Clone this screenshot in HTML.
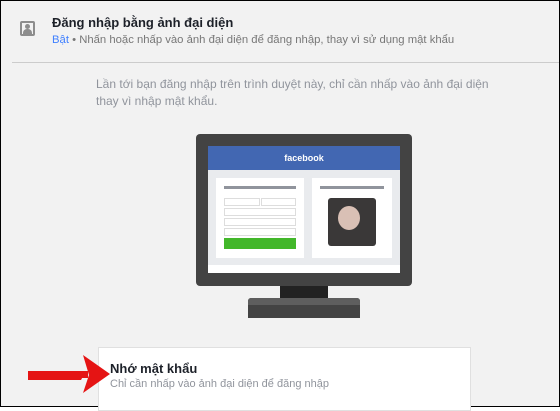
<!DOCTYPE html><html><head><meta charset="utf-8"><style>
body{margin:0;width:560px;height:407px;overflow:hidden;font-family:"Liberation Sans",Arial,sans-serif}
.f{position:relative;width:558px;height:405px;border:1px solid #000;background:#f2f2f2}
.a{position:absolute}
</style></head><body><div class="f">
<div class="a" style="left:19px;top:20px;width:15px;height:15px;background:#8d8d8d;border-radius:2px"><div class="a" style="left:2px;top:2px;width:11px;height:11px;background:#f2f2f2"></div><div class="a" style="left:5px;top:3px;width:5px;height:5px;border-radius:50%;background:#8d8d8d"></div><div class="a" style="left:3px;top:8px;width:9px;height:5px;border-radius:4px 4px 0 0;background:#8d8d8d"></div></div>
<div class="a" style="left:51px;top:14px;font-size:13px;font-weight:bold;color:#1d2129">Đăng nhập bằng ảnh đại diện</div>
<div class="a" style="left:51px;top:33px;font-size:11.3px;color:#777"><span style="color:#4080ff">Bật</span> • Nhấn hoặc nhấp vào ảnh đại diện để đăng nhập, thay vì sử dụng mật khẩu</div>
<div class="a" style="left:11px;top:61px;width:547px;height:1px;background:#ccc"></div>
<div class="a" style="left:95px;top:75px;font-size:12px;line-height:17px;color:#90949c">Lần tới bạn đăng nhập trên trình duyệt này, chỉ cần nhấp vào ảnh đại diện<br>thay vì nhập mật khẩu.</div>
<div class="a" style="left:195px;top:133px;width:216px;height:152px;background:#434343;border-radius:4px"></div>
<div class="a" style="left:207px;top:145px;width:192px;height:127px;background:#fff"></div>
<div class="a" style="left:207px;top:145px;width:192px;height:24px;background:#4267b2;color:#fff;font-weight:bold;font-size:9px;text-align:center;line-height:24px">facebook</div>
<div class="a" style="left:207px;top:169px;width:192px;height:95px;background:#e9ebee"></div>
<div class="a" style="left:215px;top:177px;width:88px;height:80px;background:#fff"></div>
<div class="a" style="left:311px;top:177px;width:80px;height:80px;background:#fff"></div>
<div class="a" style="left:223px;top:185px;width:72px;height:3px;background:#90949c"></div>
<div class="a" style="left:319px;top:185px;width:64px;height:3px;background:#90949c"></div>
<div class="a" style="left:223px;top:197px;width:34px;height:6px;border:1px solid #ddd"></div>
<div class="a" style="left:260px;top:197px;width:33px;height:6px;border:1px solid #ddd"></div>
<div class="a" style="left:223px;top:207px;width:70px;height:6px;border:1px solid #ddd"></div>
<div class="a" style="left:223px;top:217px;width:70px;height:6px;border:1px solid #ddd"></div>
<div class="a" style="left:223px;top:227px;width:70px;height:6px;border:1px solid #ddd"></div>
<div class="a" style="left:223px;top:237px;width:72px;height:11px;background:#42b72a"></div>
<div class="a" style="left:327px;top:197px;width:48px;height:48px;background:#3a3838;border-radius:3px"><div class="a" style="left:10px;top:8px;width:22px;height:24px;background:#d9c0b5;border-radius:50%"></div></div>
<div class="a" style="left:279px;top:285px;width:48px;height:12px;background:#222"></div>
<div class="a" style="left:247px;top:297px;width:112px;height:20px;background:#434343;border-radius:3px 3px 0 0"><div style="height:7px;background:#5e5e5e;border-radius:3px 3px 0 0"></div></div>
<div class="a" style="left:97px;top:346px;width:371px;height:62px;background:#fff;border:1px solid #e0e0e0"></div>
<div class="a" style="left:109px;top:360px;font-size:13px;font-weight:bold;color:#1d2129">Nhớ mật khẩu</div>
<div class="a" style="left:109px;top:377px;font-size:11px;color:#90949c">Chỉ cần nhấp vào ảnh đại diện để đăng nhập</div>
<svg class="a" style="left:25px;top:354px" width="90" height="40"><path d="M2 16H60L55 25H2Z" fill="#e51414"/><path d="M57 0L84 19L57 38L63 20Z" fill="#e51414"/><path d="M2 16H62V23H2Z" fill="#e51414"/></svg>
</div></body></html>
